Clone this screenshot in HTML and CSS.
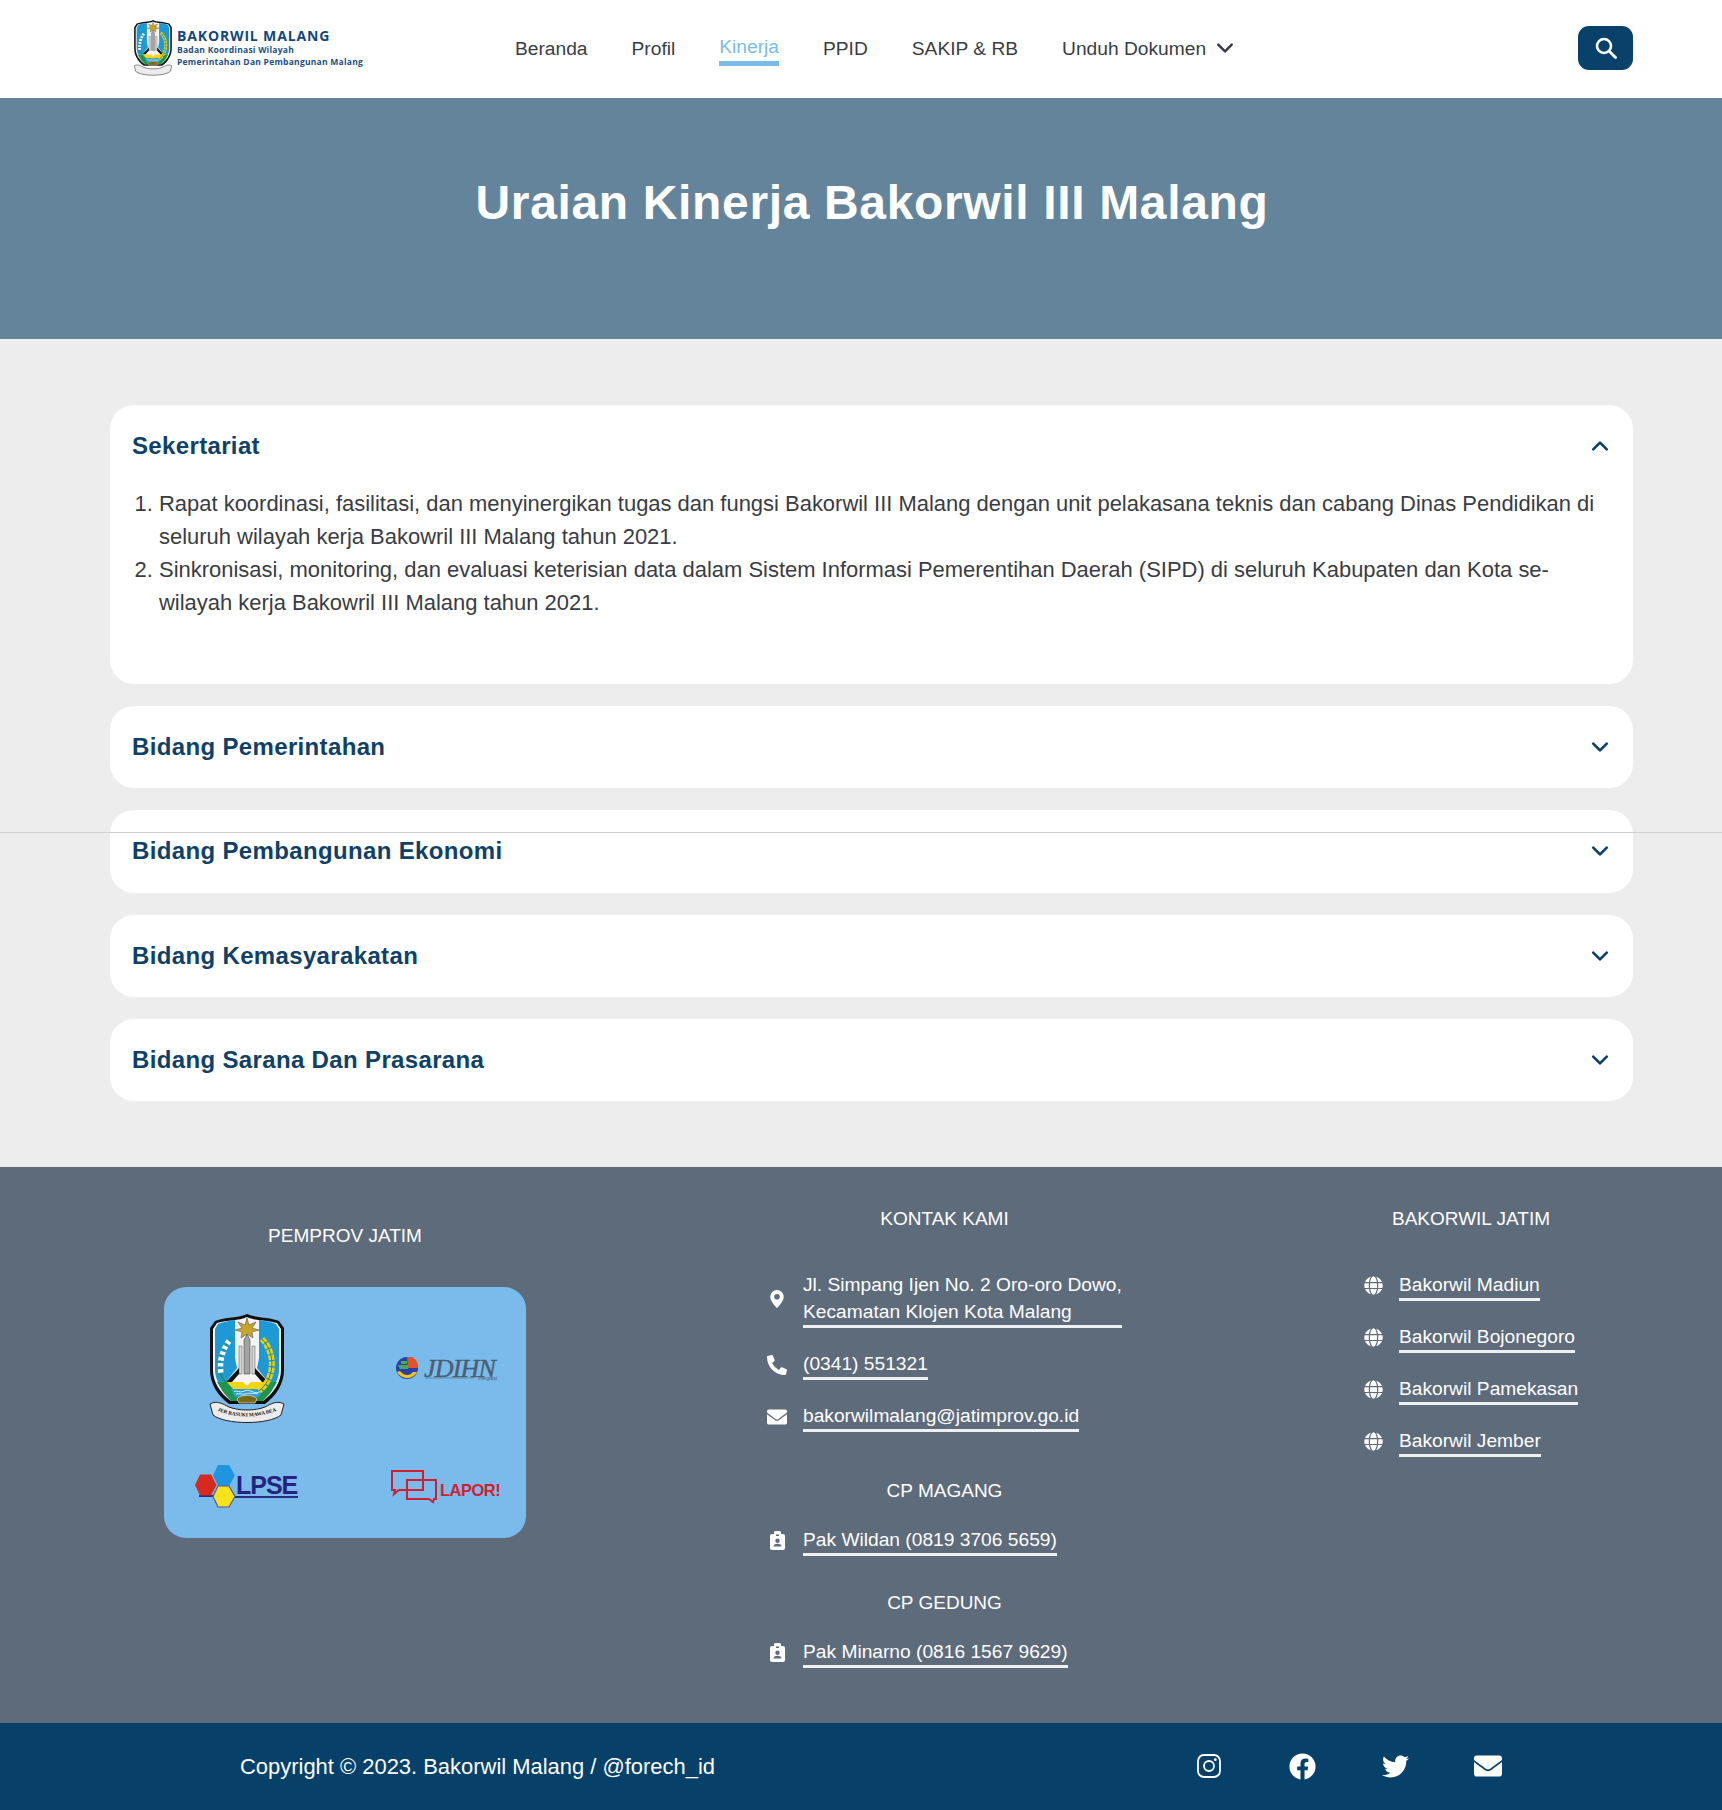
FILE: index.html
```html
<!DOCTYPE html>
<html lang="id">
<head>
<meta charset="utf-8">
<title>Uraian Kinerja Bakorwil III Malang</title>
<link rel="stylesheet" href="styles.css">
</head>
<body>
<svg class="defs" width="0" height="0" aria-hidden="true">
  <defs>
    <path id="rib" d="M4 95Q38 110 72 95"/>
    <path id="globe-path" d="M336.500 160C322 70.700 287.800 8 248 8s-74 62.700-88.500 152h177zM152 256c0 22.200 1.200 43.500 3.300 64h185.300c2.100-20.500 3.300-41.800 3.300-64s-1.200-43.500-3.300-64H155.300c-2.100 20.500-3.300 41.800-3.300 64zm324.700-96c-28.600-67.900-86.500-120.400-158-141.600 24.400 33.800 41.200 84.700 50 141.600h108zM177.200 18.400C105.800 39.600 47.800 92.100 19.300 160h108c8.700-56.900 25.500-107.800 49.900-141.600zM487.400 192H372.700c2.100 21 3.300 42.500 3.300 64s-1.200 43-3.300 64h114.600c5.500-20.500 8.600-41.800 8.600-64s-3.100-43.500-8.500-64zM120 256c0-21.500 1.200-43 3.300-64H8.600C3.200 212.500 0 233.800 0 256s3.200 43.500 8.600 64h114.600c-2-21-3.200-42.500-3.200-64zm39.500 96c14.500 89.300 48.700 152 88.500 152s74-62.700 88.500-152h-177zm159.300 141.600c71.400-21.200 129.400-73.700 158-141.600h-108c-8.800 56.900-25.600 107.800-50 141.600zM19.300 352c28.600 67.900 86.500 120.400 158 141.600-24.400-33.800-41.200-84.700-50-141.600h-108z"/>
  </defs>
  <symbol id="emblem" viewBox="0 0 76 110">
    <path d="M38 0C30 4 16 3 6 7L1 14V56C1 70 9 82 20 90H56C67 82 75 70 75 56V14L70 7C60 3 46 4 38 0Z" fill="#111"/>
    <path d="M38 3C30 7 18 6 8 9L4 15V56C4 68 11 79 22 87H54C65 79 72 68 72 56V15L68 9C58 6 46 7 38 3Z" fill="#f4f4f4"/>
    <path d="M26 6C19 7 13 8 9 10L6 15V56C6 60 7 64 9 68H17L28 54L26 44Z" fill="#1d9ad6"/>
    <path d="M50 6C57 7 63 8 67 10L70 15V56C70 60 69 64 67 68H59L48 54L50 44Z" fill="#1d9ad6"/>
    <path d="M38 4L40 11L47 8L43 14L50 16L43 18L44 24L38 20L32 24L33 18L26 16L33 14L29 8L36 11Z" fill="#c7a42a" stroke="#444" stroke-width=".5"/>
    <path d="M35 26L38 20L41 26V60H35Z" fill="#a3a3a3" stroke="#444" stroke-width=".6"/>
    <path d="M30 32H33V60H30ZM43 32H46V60H43Z" fill="#d5d5d5" stroke="#555" stroke-width=".5"/>
    <path d="M17 68L30 54V60L23 68ZM59 68L46 54V60L53 68Z" fill="#111"/>
    <path d="M18 68H34L38 72L42 68H58L54 75H22Z" fill="#f5d410"/>
    <path d="M8 68H18L24 75H52L58 68H68L62 78L54 87H22L14 78Z" fill="#1f9450"/>
    <path d="M22 75H54L50 83H26Z" fill="#2a9fd6"/>
    <path d="M25 77.500C28 76 31 79 34 77.500S40 76 43 77.500S49 79 51 77.500M27 80C30 79 33 81 36 80S42 79 49 80" fill="none" stroke="#fff" stroke-width=".8"/>
    <path d="M28 85C31 80 45 80 48 85L46 89H30Z" fill="#7a6a18" stroke="#fff" stroke-width=".6"/>
    <path d="M53 25C60 32 65 44 62 58C60 66 56 72 50 77" fill="none" stroke="#e3cf1e" stroke-width="6" stroke-dasharray="5 1.200"/>
    <path d="M53 25C60 32 65 44 62 58C60 66 56 72 50 77" fill="none" stroke="#3f7d2a" stroke-width=".9"/>
    <path d="M21 26C14 34 9 46 11 58C12 62 14 66 17 68" fill="none" stroke="#1f8f4d" stroke-width="1.600"/>
    <path d="M20 27C14 35 10 46 12 60" fill="none" stroke="#fff" stroke-width="5.500" stroke-dasharray="3.500 2.500"/>
    <path d="M1 90C8 86 14 90 20 93C30 97 46 97 56 93C62 90 68 86 75 90L72 101C60 111 16 111 4 101Z" fill="#ececec" stroke="#222" stroke-width="1"/>
  </symbol>
</svg>

<header class="topbar">
  <a class="brand" href="#">
    <svg class="brand-emblem" viewBox="0 0 76 110"><use href="#emblem"/></svg>
    <span class="brand-text">
      <span class="brand-name">BAKORWIL MALANG</span>
      <span class="brand-sub">Badan Koordinasi Wilayah</span>
      <span class="brand-sub">Pemerintahan Dan Pembangunan Malang</span>
    </span>
  </a>
  <nav class="nav">
    <a href="#">Beranda</a>
    <a href="#">Profil</a>
    <a href="#" class="active">Kinerja</a>
    <a href="#">PPID</a>
    <a href="#">SAKIP &amp; RB</a>
    <a href="#" class="drop">Unduh Dokumen
      <svg class="chev-nav" viewBox="0 0 16 16"><path d="M2 5l6 6 6-6" fill="none" stroke="currentColor" stroke-width="2.200" stroke-linecap="round" stroke-linejoin="round"/></svg>
    </a>
  </nav>
  <button class="search" type="button" aria-label="Cari">
    <svg viewBox="0 0 22 22"><circle cx="9" cy="9" r="7" fill="none" stroke="#fff" stroke-width="2.600"/><path d="M14.500 14.500L20.500 20.500" stroke="#fff" stroke-width="2.800" stroke-linecap="round"/></svg>
  </button>
</header>

<section class="hero"><h1>Uraian Kinerja Bakorwil III Malang</h1></section>

<div class="rule"></div>

<main class="content">
  <article class="card">
    <div class="card-head">
      <h2>Sekertariat</h2>
      <svg class="chev" viewBox="0 0 16 16"><path d="M2 11l6-6 6 6" fill="none" stroke="currentColor" stroke-width="2.400" stroke-linecap="round" stroke-linejoin="round"/></svg>
    </div>
    <ol class="card-list">
      <li>Rapat koordinasi, fasilitasi, dan menyinergikan tugas dan fungsi Bakorwil III Malang dengan unit pelakasana teknis dan cabang Dinas Pendidikan di seluruh wilayah kerja Bakowril III Malang tahun 2021.</li>
      <li>Sinkronisasi, monitoring, dan evaluasi keterisian data dalam Sistem Informasi Pemerentihan Daerah (SIPD) di seluruh Kabupaten dan Kota se-wilayah kerja Bakowril III Malang tahun 2021.</li>
    </ol>
  </article>
  <article class="card"><div class="card-head"><h2>Bidang Pemerintahan</h2><svg class="chev" viewBox="0 0 16 16"><path d="M2 5l6 6 6-6" fill="none" stroke="currentColor" stroke-width="2.400" stroke-linecap="round" stroke-linejoin="round"/></svg></div></article>
  <article class="card"><div class="card-head"><h2>Bidang Pembangunan Ekonomi</h2><svg class="chev" viewBox="0 0 16 16"><path d="M2 5l6 6 6-6" fill="none" stroke="currentColor" stroke-width="2.400" stroke-linecap="round" stroke-linejoin="round"/></svg></div></article>
  <article class="card"><div class="card-head"><h2>Bidang Kemasyarakatan</h2><svg class="chev" viewBox="0 0 16 16"><path d="M2 5l6 6 6-6" fill="none" stroke="currentColor" stroke-width="2.400" stroke-linecap="round" stroke-linejoin="round"/></svg></div></article>
  <article class="card"><div class="card-head"><h2>Bidang Sarana Dan Prasarana</h2><svg class="chev" viewBox="0 0 16 16"><path d="M2 5l6 6 6-6" fill="none" stroke="currentColor" stroke-width="2.400" stroke-linecap="round" stroke-linejoin="round"/></svg></div></article>
</main>

<footer class="footer">
  <div class="col col-left">
    <h3>PEMPROV JATIM</h3>
    <div class="logos">
      <svg class="logo-emblem" viewBox="0 0 76 110"><use href="#emblem"/><text class="ribbon" text-anchor="middle"><textPath href="#rib" startOffset="50%">JER BASUKI MAWA BEA</textPath></text></svg>
      <svg class="logo-jdihn" viewBox="0 -6 102 36">
        <circle cx="11" cy="11" r="11" fill="#2b3fa8"/>
        <path d="M11 0H16A11 11 0 0 1 22 11H12Z" fill="#e0532c"/>
        <path d="M1 15C5 22 16 24 21 15L17 15C14 19 8 19 4 14Z" fill="#f2c51d"/>
        <path d="M2 8H12V12H4ZM5 4H11V7H5Z" fill="#3fb14e"/>
        <text class="t-jdihn" x="28" y="20">JDIHN</text>
        <path d="M29 21H78" stroke="#4b5d70" stroke-width=".5"/>
        <text class="t-jdihn-sub" x="101" y="23" text-anchor="end">Integrasi</text>
      </svg>
      <svg class="logo-lpse" viewBox="0 0 104 44">
        <path d="M4 31H19M40 32H103" stroke="#2a2a80" stroke-width="2"/>
        <path d="M5 9.500H16L21.500 20L16 30.500H5L0 20Z" fill="#d6291f"/>
        <path d="M23 0H34L40 10.500L34 21H23L18 10.500Z" fill="#1e95de"/>
        <path d="M23 21H34L40 31.500L34 42H23L18 31.500Z" fill="#f9e11b" stroke="#4a5aa0" stroke-width="1.200"/>
        <text class="t-lpse" x="41" y="29">LPSE</text>
      </svg>
      <svg class="logo-lapor" viewBox="0 0 112 34">
        <path d="M1 1H32V20H8L3 24L4 20H1Z" fill="none" stroke="#d01f32" stroke-width="2"/>
        <path d="M16 10H45V29H43L42 32L38 29H16Z" fill="none" stroke="#d01f32" stroke-width="2"/>
        <text class="t-lapor" x="49" y="26">LAPOR!</text>
      </svg>
    </div>
  </div>

  <div class="col col-mid">
    <h3>KONTAK KAMI</h3>
    <ul class="links first">
      <li><span class="ico"><svg class="i-pin" viewBox="0 0 16 16"><path d="M8 16s6-5.686 6-10A6 6 0 0 0 2 6c0 4.314 6 10 6 10zm0-7.500a2.500 2.500 0 1 1 0-5 2.500 2.500 0 0 1 0 5z"/></svg></span><a href="#">Jl. Simpang Ijen No. 2 Oro-oro Dowo, Kecamatan Klojen Kota Malang</a></li>
      <li><span class="ico"><svg class="i-20" viewBox="0 0 512 512"><path d="M18 24L122 1a24 24 0 0 1 27 14l48 112a24 24 0 0 1-7 28l-60 50a370 370 0 0 0 177 177l50-61a24 24 0 0 1 28-7l112 48a24 24 0 0 1 14 28l-24 104a24 24 0 0 1-23 18C208 512 0 304 0 48a24 24 0 0 1 18-24z"/></svg></span><a href="#">(0341) 551321</a></li>
      <li><span class="ico"><svg class="i-20" viewBox="0 0 512 512"><path d="M502.300 190.800c3.900-3.100 9.700-.2 9.700 4.700V400c0 26.500-21.500 48-48 48H48c-26.500 0-48-21.500-48-48V195.600c0-5 5.700-7.800 9.700-4.700 22.400 17.400 52.100 39.500 154.100 113.600 21.100 15.400 56.700 47.800 92.200 47.600 35.700.3 72-32.800 92.300-47.600 102-74.100 131.600-96.300 154-113.700zM256 320c23.200.4 56.600-29.200 73.400-41.400 132.700-96.300 142.800-104.700 173.400-128.700 5.800-4.500 9.200-11.500 9.200-18.900v-19c0-26.500-21.500-48-48-48H48C21.500 64 0 85.500 0 112v19c0 7.400 3.400 14.300 9.200 18.900 30.600 23.900 40.700 32.400 173.400 128.700 16.800 12.200 50.200 41.800 73.400 41.400z"/></svg></span><a href="#">bakorwilmalang@jatimprov.go.id</a></li>
    </ul>
    <h3 class="sub-h magang">CP MAGANG</h3>
    <ul class="links">
      <li><span class="ico"><svg class="i-badge" viewBox="0 0 15 19"><path fill-rule="evenodd" d="M5.500 0h4A1.500 1.500 0 0 1 11 1.500V3h2a2 2 0 0 1 2 2v12a2 2 0 0 1-2 2H2a2 2 0 0 1-2-2V5a2 2 0 0 1 2-2h2V1.500A1.500 1.500 0 0 1 5.500 0zM6 3.500v1.500h3V3.500zM7.500 7.500a2.200 2.200 0 1 0 0 4.400 2.200 2.200 0 0 0 0-4.400zM3.500 15.500h8c0-1.800-1.500-2.800-4-2.800s-4 1-4 2.800z"/></svg></span><a href="#">Pak Wildan (0819 3706 5659)</a></li>
    </ul>
    <h3 class="sub-h">CP GEDUNG</h3>
    <ul class="links">
      <li><span class="ico"><svg class="i-badge" viewBox="0 0 15 19"><path fill-rule="evenodd" d="M5.500 0h4A1.500 1.500 0 0 1 11 1.500V3h2a2 2 0 0 1 2 2v12a2 2 0 0 1-2 2H2a2 2 0 0 1-2-2V5a2 2 0 0 1 2-2h2V1.500A1.500 1.500 0 0 1 5.500 0zM6 3.500v1.500h3V3.500zM7.500 7.500a2.200 2.200 0 1 0 0 4.400 2.200 2.200 0 0 0 0-4.400zM3.500 15.500h8c0-1.800-1.500-2.800-4-2.800s-4 1-4 2.800z"/></svg></span><a href="#">Pak Minarno (0816 1567 9629)</a></li>
    </ul>
  </div>

  <div class="col col-right">
    <h3>BAKORWIL JATIM</h3>
    <ul class="links first">
      <li><span class="ico"><svg class="i-globe" viewBox="0 0 496 512"><use href="#globe-path"/></svg></span><a href="#">Bakorwil Madiun</a></li>
      <li><span class="ico"><svg class="i-globe" viewBox="0 0 496 512"><use href="#globe-path"/></svg></span><a href="#">Bakorwil Bojonegoro</a></li>
      <li><span class="ico"><svg class="i-globe" viewBox="0 0 496 512"><use href="#globe-path"/></svg></span><a href="#">Bakorwil Pamekasan</a></li>
      <li><span class="ico"><svg class="i-globe" viewBox="0 0 496 512"><use href="#globe-path"/></svg></span><a href="#">Bakorwil Jember</a></li>
    </ul>
  </div>
</footer>

<div class="bottom">
  <p class="copy">Copyright © 2023. Bakorwil Malang / @forech_id</p>
  <div class="social">
    <a href="#" aria-label="Instagram"><svg class="s-ig" viewBox="0 0 24 24"><rect x="1" y="1" width="22" height="22" rx="6" fill="none" stroke="#fff" stroke-width="1.800"/><circle cx="12" cy="12" r="5" fill="none" stroke="#fff" stroke-width="1.800"/><circle cx="18.300" cy="5.700" r="1.400" fill="#fff"/></svg></a>
    <a href="#" aria-label="Facebook"><svg class="s-fb" viewBox="0 0 512 512"><path d="M504 256C504 119 393 8 256 8S8 119 8 256c0 123.780 90.690 226.380 209.250 245V327.690h-63V256h63v-54.640c0-62.150 37-96.480 93.670-96.480 27.140 0 55.520 4.840 55.520 4.840v61h-31.280c-30.800 0-40.410 19.120-40.410 38.730V256h68.780l-11 71.690h-57.780V501C413.310 482.380 504 379.780 504 256z"/></svg></a>
    <a href="#" aria-label="Twitter"><svg class="s-tw" viewBox="0 0 512 512"><path d="M459.370 151.716c.325 4.548.325 9.097.325 13.645 0 138.720-105.583 298.558-298.558 298.558-59.452 0-114.680-17.219-161.137-47.106 8.447.974 16.568 1.299 25.340 1.299 49.055 0 94.213-16.568 130.274-44.832-46.132-.975-84.792-31.188-98.112-72.772 6.498.974 12.995 1.624 19.818 1.624 9.421 0 18.843-1.300 27.614-3.573-48.081-9.747-84.143-51.980-84.143-102.985v-1.299c13.969 7.797 30.214 12.670 47.431 13.319-28.264-18.843-46.781-51.005-46.781-87.391 0-19.492 5.197-37.360 14.294-52.954 51.655 63.675 129.300 105.258 216.365 109.807-1.624-7.797-2.599-15.918-2.599-24.040 0-57.828 46.782-104.934 104.934-104.934 30.213 0 57.502 12.670 76.670 33.137 23.715-4.548 46.456-13.320 66.599-25.340-7.798 24.366-24.366 44.833-46.132 57.827 21.117-2.273 41.584-8.122 60.426-16.243-14.292 20.791-32.161 39.308-52.628 54.253z"/></svg></a>
    <a href="#" aria-label="Email"><svg class="s-mail" viewBox="0 0 512 512"><path d="M502.300 190.800c3.900-3.100 9.700-.2 9.700 4.700V400c0 26.500-21.500 48-48 48H48c-26.500 0-48-21.500-48-48V195.600c0-5 5.700-7.800 9.700-4.700 22.400 17.400 52.100 39.500 154.100 113.600 21.100 15.400 56.700 47.800 92.200 47.600 35.700.3 72-32.800 92.300-47.600 102-74.100 131.600-96.300 154-113.700zM256 320c23.200.4 56.600-29.200 73.400-41.400 132.700-96.300 142.800-104.700 173.400-128.700 5.800-4.500 9.200-11.500 9.200-18.900v-19c0-26.500-21.500-48-48-48H48C21.500 64 0 85.500 0 112v19c0 7.400 3.400 14.300 9.200 18.900 30.600 23.900 40.700 32.400 173.400 128.700 16.800 12.200 50.200 41.800 73.400 41.400z"/></svg></a>
  </div>
</div>
</body>
</html>
```
FILE: styles.css
```css
* { box-sizing: border-box; }
html, body { margin: 0; padding: 0; }
body {
  position: relative;
  width: 1722px;
  height: 1810px;
  overflow: hidden;
  background: #ededee;
  color: #393c44;
  font-family: "Liberation Sans", Arial, sans-serif;
  font-size: 19.200px;
  line-height: 27px;
}
a { color: inherit; text-decoration: none; }
h1, h2, h3, p, ul, ol { margin: 0; padding: 0; }
ul { list-style: none; }
.defs { position: absolute; }

.topbar {
  height: 98px;
  display: flex;
  align-items: center;
  padding: 0 89px 2px 133px;
  background: #fff;
}
.brand { display: flex; align-items: center; width: 382px; gap: 4px; }
.brand-emblem { width: 40px; height: 56px; flex: none; }
.brand-text { display: flex; flex-direction: column; padding-bottom: 1px; font-family: "Open Sans", sans-serif; font-weight: 700; color: #11477a; }
.brand-name { font-size: 14px; line-height: 17px; letter-spacing: .85px; }
.brand-sub { font-size: 8.500px; line-height: 12px; letter-spacing: .25px; color: #1c4f80; }

.nav { display: flex; align-items: center; gap: 44px; flex: 1; }
.nav a { display: flex; align-items: center; }
.nav .active { color: #7abbe9; border-bottom: 5px solid #7abbe9; margin-top: 3px; line-height: 26px; padding-bottom: 1px; }
.nav .drop { gap: 10px; }
.chev-nav { width: 18px; height: 18px; }

.search {
  width: 55px;
  height: 44px;
  border: 0;
  border-radius: 11px;
  padding: 0;
  background: #084169;
  display: flex;
  align-items: center;
  justify-content: center;
}
.search svg { width: 22px; height: 22px; }

.hero {
  height: 241px;
  padding: 76px 0 0 22px;
  background: #64849c;
  color: #fff;
  text-align: center;
}
.hero h1 { font-size: 48px; line-height: 58px; font-weight: 700; letter-spacing: .65px; }

.rule { position: absolute; left: 0; right: 0; top: 832px; height: 1px; background: #cfd0d2; z-index: 2; }

.content {
  display: flex;
  flex-direction: column;
  gap: 22px;
  padding: 66px 89px 65.800px 110px;
}
.card { background: #fff; border-radius: 24px; }
.card-head {
  height: 82.300px;
  display: flex;
  align-items: center;
  justify-content: space-between;
  padding: 0 24px 0 22px;
  color: #0f4168;
}
.card-head h2 { font-size: 24px; font-weight: 700; letter-spacing: .35px; line-height: 36px; }
.chev { width: 18px; height: 18px; }
.card-list { padding: 0 25px 64.700px 49px; font-size: 21.960px; line-height: 33px; }

.footer {
  height: 556px;
  display: flex;
  gap: 241px;
  padding: 38px 0 0 164px;
  background: #5e6b7b;
  color: #fff;
}
.col h3 { font-size: 19px; font-weight: 400; text-align: center; line-height: 27px; }
.col-left { width: 362px; padding-top: 17px; }
.col-mid { width: 355px; }
.col-right { width: 214px; margin-left: 1px; }
.col-right a { white-space: nowrap; }

.logos {
  margin-top: 38px;
  height: 251px;
  padding: 28px 0 0 5px;
  border-radius: 22px;
  background: #7abbeb;
  display: grid;
  grid-template-columns: 156px 156px;
  grid-template-rows: 109px 109px;
  column-gap: 44px;
  row-gap: 9px;
  justify-items: center;
  align-items: center;
}
.logo-emblem { width: 76px; height: 110px; }
.logo-jdihn { width: 102px; height: 36px; }
.logo-lpse { width: 104px; height: 44px; }
.logo-lapor { width: 112px; height: 34px; }
.ribbon { font: 700 5.200px "Liberation Serif", serif; fill: #111; }
.t-jdihn { font: italic 400 26px "Liberation Serif", serif; fill: #4b5d70; stroke: #4b5d70; stroke-width: .4px; letter-spacing: -.8px; }
.t-jdihn-sub { font: 5px "Liberation Sans", sans-serif; fill: #4b5d70; }
.t-lpse { font: 700 25px "Liberation Sans", sans-serif; fill: #24237e; letter-spacing: -1px; }
.t-lapor { font: 700 16.500px "Liberation Sans", sans-serif; fill: #d01f32; letter-spacing: -.5px; }

.links { display: flex; flex-direction: column; gap: 22px; margin-top: 22px; }
.links.first { margin-top: 39px; }
.links li { display: flex; align-items: center; }
.ico { width: 36px; flex: none; display: flex; }
.col-right .ico { width: 35px; }
.links a { border-bottom: 3px solid #eef0f2; }
.ico svg { fill: #fff; }
.i-20 { width: 20px; height: 20px; }
.i-pin { width: 20px; height: 18px; }
.i-badge { width: 15px; height: 19px; margin-left: 3px; }
.i-globe { width: 19px; height: 19px; }
.sub-h { margin-top: 33px; }
.sub-h.magang { margin-top: 45px; }

.bottom {
  height: 87px;
  display: flex;
  align-items: center;
  padding: 0 0 0 240px;
  background: #07416a;
  color: #fff;
}
.copy { font-size: 21.950px; width: 922.500px; }
.social { display: flex; align-items: center; }
.social a { width: 93px; display: flex; justify-content: center; }
.social svg { fill: #fff; }
.s-ig { width: 24px; height: 24px; }
.s-fb { width: 27px; height: 27px; }
.s-tw { width: 27px; height: 27px; }
.s-mail { width: 28px; height: 28px; }
```
